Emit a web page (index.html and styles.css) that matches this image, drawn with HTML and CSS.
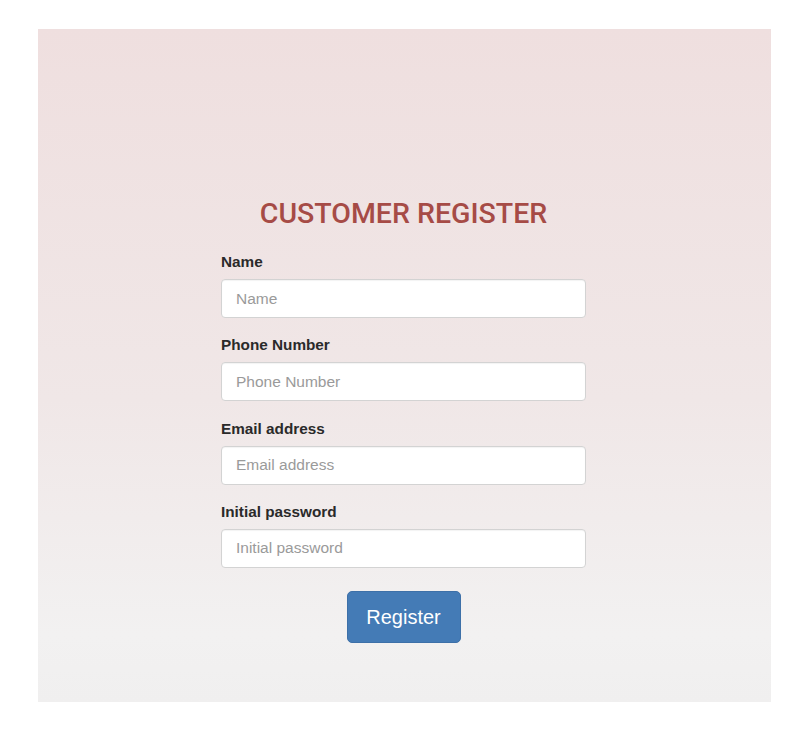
FILE: index.html
```html
<!DOCTYPE html>
<html>
<head>
<meta charset="utf-8">
<link rel="stylesheet" href="styles.css">
</head>
<body>
<div class="panel">
  <form class="form">
    <h1 class="title">CUSTOMER REGISTER</h1>
    <div class="field">
      <label class="label">Name</label>
      <input class="input" type="text" placeholder="Name">
    </div>
    <div class="field">
      <label class="label">Phone Number</label>
      <input class="input" type="text" placeholder="Phone Number">
    </div>
    <div class="field">
      <label class="label">Email address</label>
      <input class="input" type="text" placeholder="Email address">
    </div>
    <div class="field">
      <label class="label">Initial password</label>
      <input class="input" type="password" placeholder="Initial password">
    </div>
    <div class="actions">
      <button class="btn" type="button">Register</button>
    </div>
  </form>
</div>
</body>
</html>
```
FILE: styles.css
```css
html, body {
  margin: 0;
  padding: 0;
  background: #ffffff;
}
body {
  font-family: "Liberation Sans", Arial, sans-serif;
}
.panel {
  margin: 29px 0 0 38px;
  width: 733px;
  height: 673px;
  box-sizing: border-box;
  background: linear-gradient(to bottom, #efdfdf 0%, #f0e7e7 55%, #f2f1f1 90%, #f0efef 100%);
  display: flex;
  justify-content: center;
  padding-top: 167px;
}
.form {
  width: 365px;
  display: flex;
  flex-direction: column;
  margin-left: -2px;
}
.title {
  margin: 0 0 20px 0;
  font-family: Roboto, "Liberation Sans", sans-serif;
  font-weight: 500;
  font-size: 28.5px;
  line-height: 36px;
  color: #a64b46;
  text-align: center;
}
.field {
  display: flex;
  flex-direction: column;
  margin-bottom: 17.3px;
}
.label {
  font-weight: bold;
  font-size: 15.3px;
  line-height: 20px;
  color: #2a2a2a;
  margin-bottom: 7px;
}
.input {
  height: 39px;
  box-sizing: border-box;
  border: 1px solid #d3d3d3;
  border-radius: 4px;
  background: #ffffff;
  padding: 0 14px;
  font-family: "Liberation Sans", Arial, sans-serif;
  font-size: 15.5px;
  color: #333;
  box-shadow: inset 0 1px 1px rgba(0,0,0,0.05);
}
.input::placeholder {
  color: #9a9a9a;
}
.actions {
  display: flex;
  justify-content: center;
  margin-top: 6px;
}
.btn {
  width: 114px;
  height: 52px;
  background: #447bb6;
  border: 1px solid #3d70a8;
  border-radius: 5px;
  color: #ffffff;
  font-family: "Liberation Sans", Arial, sans-serif;
  font-size: 20px;
  padding: 0;
}
```
